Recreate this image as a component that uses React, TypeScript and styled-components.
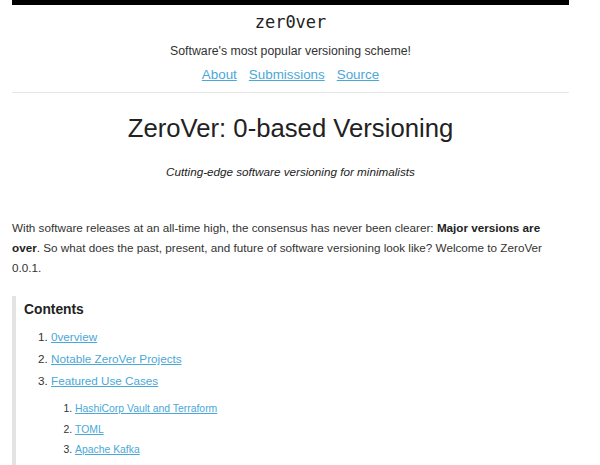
import React from "react";
import styled, { createGlobalStyle } from "styled-components";

const Global = createGlobalStyle`
  html, body { margin: 0; padding: 0; background: #fff; }
  body { font-family: "Liberation Sans", Arial, sans-serif; color: #333; }
`;

const Page = styled.div`
  width: 557px;
  margin: 0 0 0 12px;
  border-top: 5px solid #000;
`;

const Header = styled.header`
  display: flex;
  flex-direction: column;
  align-items: center;
  border-bottom: 1px solid #e6e6e6;
  padding: 6px 0 8px;
`;

const Logo = styled.div`
  font-family: "DejaVu Sans Mono", monospace;
  font-size: 17px;
  line-height: 22px;
  color: #222;
`;

const Tagline = styled.div`
  font-size: 12.3px;
  line-height: 16px;
  margin-top: 10px;
  color: #333;
`;

const Nav = styled.nav`
  display: flex;
  gap: 12px;
  margin-top: 7px;
  line-height: 18px;
`;

const Link = styled.a<{ $size?: number }>`
  color: #4aa8d8;
  text-decoration: underline;
  font-size: ${(p) => p.$size ?? 13.4}px;
  cursor: pointer;
`;

const Title = styled.h1`
  font-weight: normal;
  font-size: 25.7px;
  line-height: 34px;
  text-align: center;
  margin: 18px 0 0;
  color: #222;
`;

const Subtitle = styled.p`
  font-style: italic;
  font-size: 11.7px;
  line-height: 16px;
  text-align: center;
  margin: 19px 0 0;
  color: #222;
`;

const Intro = styled.p`
  font-size: 11.7px;
  line-height: 20px;
  margin: 38px 0 0;
  max-width: 540px;
  color: #333;
  b { color: #222; }
`;

const Toc = styled.section`
  margin-top: 18px;
  border-left: 4px solid #e3e3e3;
  padding: 5px 0 10px 8px;
`;

const TocTitle = styled.h2`
  font-size: 13.8px;
  line-height: 18px;
  font-weight: bold;
  margin: 0 0 7px 0;
  color: #222;
`;

const List = styled.ol<{ $small?: boolean }>`
  margin: ${(p) => (p.$small ? "7px 0 0" : "0")};
  padding-left: ${(p) => (p.$small ? "24px" : "27px")};
  font-size: ${(p) => (p.$small ? 10.4 : 11.7)}px;
  color: #333;
`;

const Item = styled.li<{ $small?: boolean }>`
  line-height: ${(p) => (p.$small ? 20.5 : 22)}px;
`;

export default function App() {
  return (
    <>
      <Global />
      <Page>
        <Header>
          <Logo>zer0ver</Logo>
          <Tagline>Software's most popular versioning scheme!</Tagline>
          <Nav>
            <Link>About</Link>
            <Link>Submissions</Link>
            <Link>Source</Link>
          </Nav>
        </Header>
        <Title>ZeroVer: 0-based Versioning</Title>
        <Subtitle>Cutting-edge software versioning for minimalists</Subtitle>
        <Intro>
          With software releases at an all-time high, the consensus has never been clearer:{" "}
          <b>Major versions are over</b>. So what does the past, present, and future of software
          versioning look like? Welcome to ZeroVer 0.0.1.
        </Intro>
        <Toc>
          <TocTitle>Contents</TocTitle>
          <List>
            <Item><Link $size={11.7}>0verview</Link></Item>
            <Item><Link $size={11.7}>Notable ZeroVer Projects</Link></Item>
            <Item>
              <Link $size={11.7}>Featured Use Cases</Link>
              <List $small>
                <Item $small><Link $size={10.4}>HashiCorp Vault and Terraform</Link></Item>
                <Item $small><Link $size={10.4}>TOML</Link></Item>
                <Item $small><Link $size={10.4}>Apache Kafka</Link></Item>
              </List>
            </Item>
          </List>
        </Toc>
      </Page>
    </>
  );
}
